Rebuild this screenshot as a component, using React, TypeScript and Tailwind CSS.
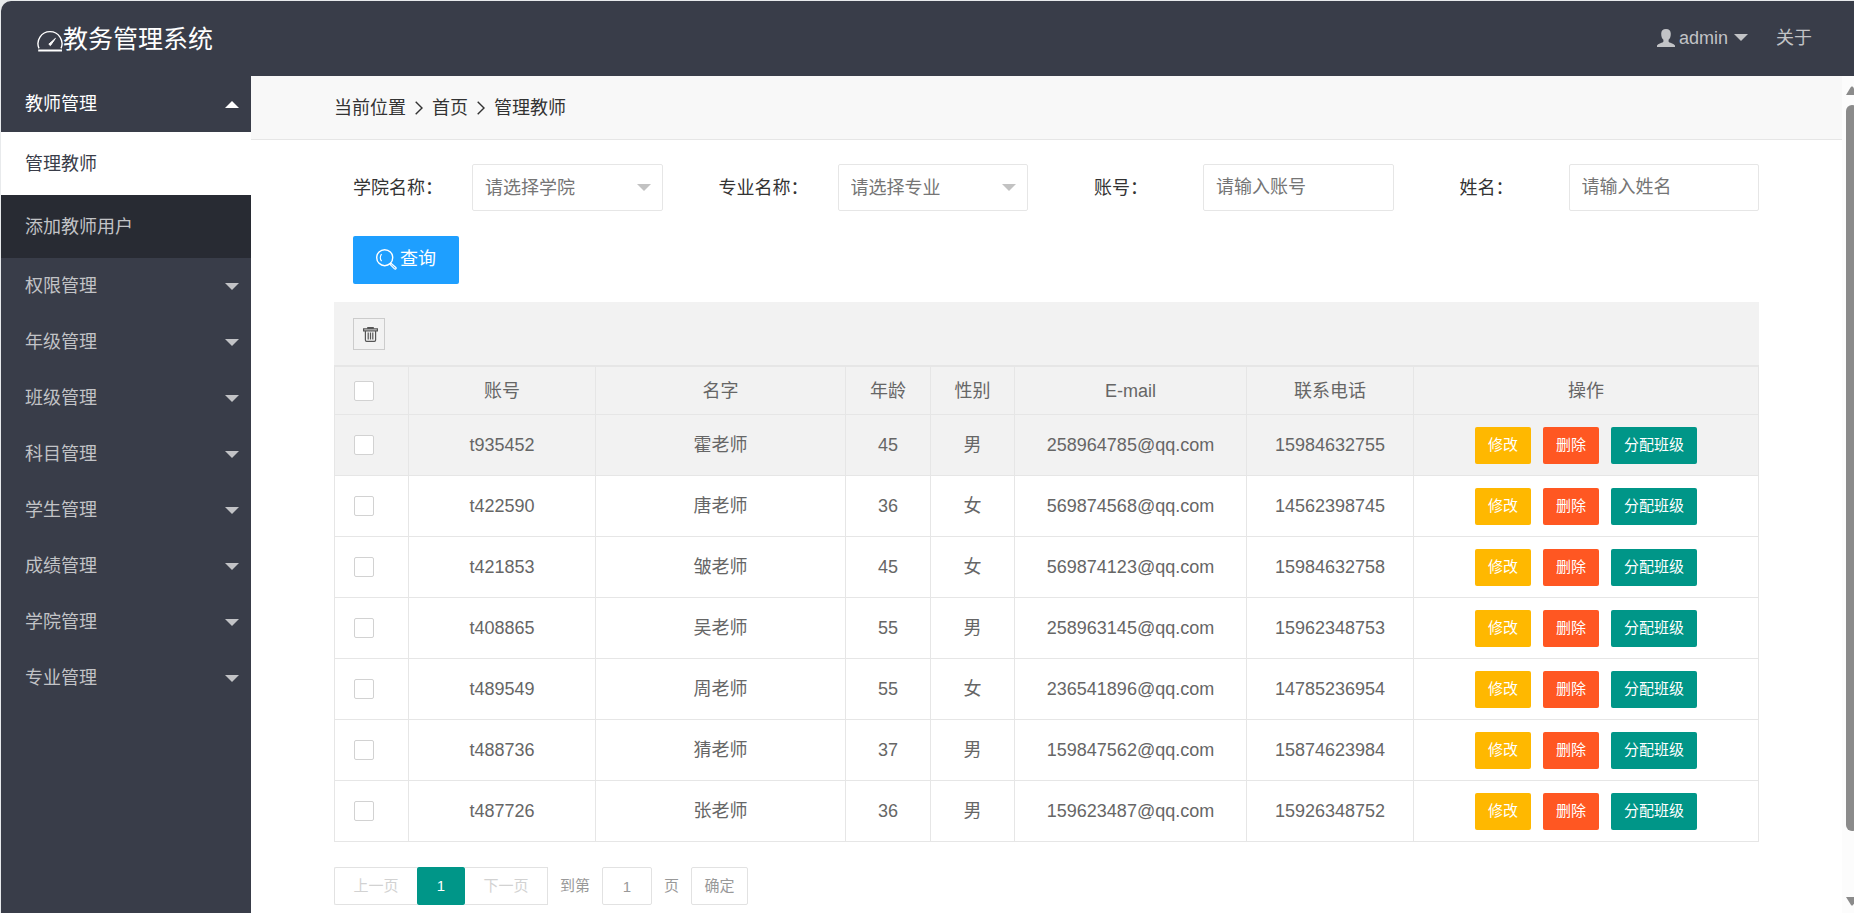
import React from "react";

const MENU = ["权限管理", "年级管理", "班级管理", "科目管理", "学生管理", "成绩管理", "学院管理", "专业管理"];

const TEACHERS = [
  { id: "t935452", name: "霍老师", age: 45, sex: "男", mail: "258964785@qq.com", tel: "15984632755" },
  { id: "t422590", name: "唐老师", age: 36, sex: "女", mail: "569874568@qq.com", tel: "14562398745" },
  { id: "t421853", name: "皱老师", age: 45, sex: "女", mail: "569874123@qq.com", tel: "15984632758" },
  { id: "t408865", name: "吴老师", age: 55, sex: "男", mail: "258963145@qq.com", tel: "15962348753" },
  { id: "t489549", name: "周老师", age: 55, sex: "女", mail: "236541896@qq.com", tel: "14785236954" },
  { id: "t488736", name: "猜老师", age: 37, sex: "男", mail: "159847562@qq.com", tel: "15874623984" },
  { id: "t487726", name: "张老师", age: 36, sex: "男", mail: "159623487@qq.com", tel: "15926348752" },
];

function Caret({ up = false, className = "" }: { up?: boolean; className?: string }) {
  return (
    <svg className={`h-[7px] w-[14px] shrink-0 ${className}`} viewBox="0 0 14 7" fill="currentColor" aria-hidden="true">
      <path d={up ? "M0 7 7 0l7 7z" : "M0 0h14L7 7z"} />
    </svg>
  );
}

function GaugeIcon() {
  return (
    <svg className="mt-1 h-[22px] w-[26px] shrink-0" viewBox="0 0 26 22" fill="none" stroke="currentColor" strokeWidth="1.4" aria-hidden="true">
      <path d="M2 18.400A12 12 0 1 1 24 18.400" />
      <path d="M1.200 20.500h23.800" strokeWidth="1.800" />
      <path d="M11.800 14.200 18.400 8.400l-5 7.200z" fill="currentColor" strokeWidth="1" strokeLinejoin="round" />
    </svg>
  );
}

function UserIcon() {
  return (
    <svg className="h-[18px] w-[18px] shrink-0" viewBox="0 0 18 18" fill="currentColor" aria-hidden="true">
      <path d="M9 0c3.200 0 4.800 1.800 4.800 4.800 0 3-.8 4.800-2.200 6v1.600c0 1.200 5.800 2.200 6.400 4.200V18H0v-1.400c.6-2 6.400-3 6.400-4.200v-1.600c-1.400-1.200-2.200-3-2.200-6C4.200 1.800 5.800 0 9 0z" />
    </svg>
  );
}

function SearchIcon() {
  return (
    <svg className="h-[21px] w-[21px] shrink-0" viewBox="0 0 21 21" fill="none" stroke="currentColor" strokeWidth="1.400" aria-hidden="true">
      <circle cx="8.700" cy="8.700" r="8" />
      <path d="M5.600 5.200c-1.500 2-1.500 5 0 7" strokeWidth="1.100" />
      <path d="m15 14.200 4.800 4.300c.9.900-.4 2.200-1.300 1.400L14 15.300z" strokeWidth="1.200" strokeLinejoin="round" />
    </svg>
  );
}

function TrashIcon() {
  return (
    <svg className="mt-[2px] ml-[2px] h-[15px] w-[15px]" viewBox="0 0 15 15" fill="none" stroke="currentColor" strokeWidth="1.200" aria-hidden="true">
      <path d="M.6 3.800v-2h13.800v2zM4.800 1.600V.6h5.400v1M2.400 4v9c0 .8.400 1.300 1.200 1.300h7.800c.8 0 1.200-.5 1.200-1.300V4" />
      <path d="M5.200 5.500v7M7.500 5.500v7M9.800 5.500v7" />
    </svg>
  );
}

function Separator() {
  return (
    <svg className="h-[14px] w-[8px] shrink-0" viewBox="0 0 8 14" fill="none" stroke="currentColor" strokeWidth="1.400" aria-hidden="true">
      <path d="m.7.7 6.300 6.300L.7 13.300" />
    </svg>
  );
}

const CONTROL =
  "block h-[47px] w-full appearance-none rounded-xs border border-[#e6e6e6] bg-white px-3 text-[#757575] placeholder:text-[#757575] outline-none";

function Field({ id, label, indent = false, children }: { id: string; label: string; indent?: boolean; children: React.ReactNode }) {
  return (
    <div className="flex items-center">
      <label htmlFor={id} className={`w-[119px] shrink-0 ${indent ? "pl-[10px]" : ""}`}>
        {label}
      </label>
      <div className="relative min-w-0 flex-1">{children}</div>
    </div>
  );
}

function Check({ label }: { label: string }) {
  return (
    <input
      type="checkbox"
      aria-label={label}
      className="block h-5 w-5 appearance-none rounded-xs border border-[#d2d2d2] bg-white checked:bg-[#009688]"
    />
  );
}

const CELL = "border border-[#e6e6e6] p-0 text-center font-normal";
const ACTION = "h-[37px] rounded-xs px-[13px] text-[15px] text-white";

export default function App() {
  return (
    <div className="h-screen overflow-hidden bg-[#e8eaec] pt-px pl-px font-['Liberation_Sans','Noto_Sans_CJK_SC',sans-serif] text-[18px] leading-6 text-[#333]">
      <div className="flex h-full flex-col overflow-hidden rounded-tl-[10px] bg-white">
        <header className="flex h-[75px] shrink-0 items-center justify-between bg-[#393d49] pr-[42px] pl-[36px] text-[#c2c3c6]">
          <h1 className="flex items-center text-[25px] leading-8 text-white">
            <GaugeIcon />
            教务管理系统
          </h1>
          <nav className="flex items-center gap-7 pb-[2px]">
            <a href="#admin" className="flex items-center">
              <UserIcon />
              <span className="ml-1">admin</span>
              <Caret className="ml-[6px]" />
            </a>
            <a href="#about">关于</a>
          </nav>
        </header>

        <div className="flex min-h-0 flex-1">
          <aside className="w-[250px] shrink-0 bg-[#393d49] text-[#c2c3c6]">
            <button className="flex h-14 w-full items-center justify-between pr-3 pl-6 text-white">
              教师管理
              <Caret up />
            </button>
            <a href="#teachers" className="flex h-[63px] items-center bg-white pl-6 text-[#393d49]">
              管理教师
            </a>
            <a href="#add-teacher" className="flex h-[63px] items-center bg-[#282b33] pl-6">
              添加教师用户
            </a>
            {MENU.map((m) => (
              <button key={m} className="flex h-14 w-full items-center justify-between pr-3 pl-6">
                {m}
                <Caret />
              </button>
            ))}
          </aside>

          <main className="min-w-0 flex-1">
            <nav className="flex h-16 items-center gap-[9px] border-b border-[#e6e6e6] bg-[#f8f8f8] px-[83px]">
              <span>当前位置</span>
              <Separator />
              <a href="#home">首页</a>
              <Separator />
              <a href="#teachers">管理教师</a>
            </nav>

            <div className="px-[83px]">
              <form className="pt-6 pb-[18px] pl-[19px]" onSubmit={(e) => e.preventDefault()}>
                <div className="grid grid-cols-4 gap-x-14">
                  <Field id="college" label="学院名称：">
                    <select id="college" className={CONTROL}>
                      <option>请选择学院</option>
                    </select>
                    <Caret className="pointer-events-none absolute top-5 right-3 text-[#c2c2c2]" />
                  </Field>
                  <Field id="major" label="专业名称：">
                    <select id="major" className={CONTROL}>
                      <option>请选择专业</option>
                    </select>
                    <Caret className="pointer-events-none absolute top-5 right-3 text-[#c2c2c2]" />
                  </Field>
                  <Field id="account" label="账号：" indent>
                    <input id="account" placeholder="请输入账号" className={CONTROL} />
                  </Field>
                  <Field id="name" label="姓名：" indent>
                    <input id="name" placeholder="请输入姓名" className={CONTROL} />
                  </Field>
                </div>
                <button className="mt-[25px] flex h-12 w-[106px] items-center justify-center gap-[3px] rounded-xs bg-[#1e9fff] pb-[2px] text-white">
                  <SearchIcon />
                  查询
                </button>
              </form>

              <div className="flex h-16 items-center border-b border-[#e6e6e6] bg-[#f2f2f2] px-[19px]">
                <button aria-label="删除所选" className="flex h-8 w-8 items-center justify-center border border-[#ccc] text-[#555]">
                  <TrashIcon />
                </button>
              </div>
              <table className="w-full table-fixed border-collapse text-[#666]">
                <colgroup>
                  <col className="w-[74px]" />
                  <col className="w-[187px]" />
                  <col className="w-[250px]" />
                  <col className="w-[85px]" />
                  <col className="w-[84px]" />
                  <col className="w-[232px]" />
                  <col className="w-[167px]" />
                  <col />
                </colgroup>
                <thead>
                  <tr className="h-12 bg-[#f2f2f2]">
                    <th className={CELL}>
                      <div className="pl-[19px]">
                        <Check label="全选" />
                      </div>
                    </th>
                    {["账号", "名字", "年龄", "性别", "E-mail", "联系电话", "操作"].map((h) => (
                      <th key={h} className={CELL}>
                        {h}
                      </th>
                    ))}
                  </tr>
                </thead>
                <tbody>
                  {TEACHERS.map((t, i) => (
                    <tr key={t.id} className={`h-[61px] ${i === 0 ? "bg-[#f2f2f2]" : ""}`}>
                      <td className={CELL}>
                        <div className="pl-[19px]">
                          <Check label={t.name} />
                        </div>
                      </td>
                      <td className={CELL}>{t.id}</td>
                      <td className={CELL}>{t.name}</td>
                      <td className={CELL}>{t.age}</td>
                      <td className={CELL}>{t.sex}</td>
                      <td className={CELL}>{t.mail}</td>
                      <td className={CELL}>{t.tel}</td>
                      <td className={CELL}>
                        <div className="flex justify-center gap-3">
                          <button className={`bg-[#ffb800] ${ACTION}`}>修改</button>
                          <button className={`bg-[#ff5722] ${ACTION}`}>删除</button>
                          <button className={`bg-[#009688] ${ACTION}`}>分配班级</button>
                        </div>
                      </td>
                    </tr>
                  ))}
                </tbody>
              </table>

              <div className="mt-[25px] flex h-[38px] items-center text-[15px] text-[#999]">
                <button disabled className="h-full w-[83px] rounded-l-xs border border-r-0 border-[#e2e2e2] text-[#d2d2d2]">
                  上一页
                </button>
                <button className="h-full w-12 rounded-xs bg-[#009688] text-white">1</button>
                <button disabled className="h-full w-[83px] border border-l-0 border-[#e2e2e2] text-[#d2d2d2]">
                  下一页
                </button>
                <label htmlFor="page" className="ml-3">
                  到第
                </label>
                <input id="page" defaultValue="1" className="mx-3 h-full w-[50px] rounded-xs border border-[#e2e2e2] text-center outline-none" />
                <span>页</span>
                <button className="ml-3 h-full w-[57px] rounded-xs border border-[#e2e2e2]">确定</button>
              </div>
            </div>
          </main>

          <div className="flex w-3 shrink-0 flex-col justify-between overflow-hidden bg-[#fcfcfc] pt-[10px] pb-[7px] pl-1 text-[#8b8b8b]" aria-hidden="true">
            <svg className="h-[10px] w-3 shrink-0" viewBox="0 0 12 10" fill="currentColor">
              <path d="M0 9 5 .8Q6 0 7 .8L12 9z" />
            </svg>
            <div className="mt-[9px] mb-[65px] w-3 flex-1 rounded-[6px] bg-[#8b8b8b]" />
            <svg className="h-[10px] w-3 shrink-0" viewBox="0 0 12 10" fill="currentColor">
              <path d="M0 1h12L7 9Q6 10 5 9z" />
            </svg>
          </div>
        </div>
      </div>
    </div>
  );
}
